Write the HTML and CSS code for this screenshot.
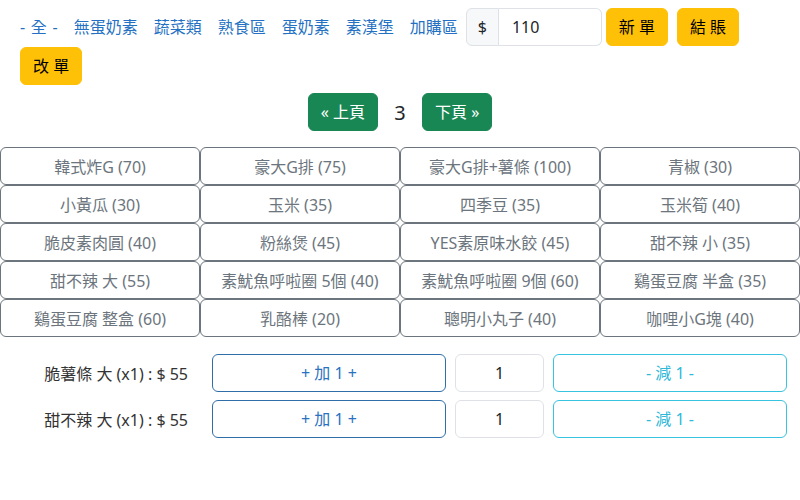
FILE: index.html
```html
<!DOCTYPE html>
<html lang="zh-Hant">
<head>
    <meta charset="UTF-8">
    <meta name="viewport" content="width=device-width, initial-scale=1.0">
    <title>點餐</title>
    <link rel="stylesheet" href="styles.css">
</head>
<body>

    <div class="toolbar">
        <a class="cat cat-all" href="#">- 全 -</a>
        <a class="cat" href="#">無蛋奶素</a>
        <a class="cat" href="#">蔬菜類</a>
        <a class="cat" href="#">熟食區</a>
        <a class="cat" href="#">蛋奶素</a>
        <a class="cat" href="#">素漢堡</a>
        <a class="cat" href="#">加購區</a>
        <div class="input-group">
            <span class="addon">$</span>
            <input type="text" class="total" value="110">
        </div>
        <button class="btn btn-warning btn-new">新 單</button>
        <button class="btn btn-warning btn-pay">結 賬</button>
        <button class="btn btn-warning">改 單</button>
    </div>

    <div class="pager">
        <button class="btn btn-success">« 上頁</button>
        <span class="page-no">3</span>
        <button class="btn btn-success">下頁 »</button>
    </div>

    <div class="menu-grid">
        <button class="item">韓式炸G (70)</button>
        <button class="item">豪大G排 (75)</button>
        <button class="item">豪大G排+薯條 (100)</button>
        <button class="item">青椒 (30)</button>
        <button class="item">小黃瓜 (30)</button>
        <button class="item">玉米 (35)</button>
        <button class="item">四季豆 (35)</button>
        <button class="item">玉米筍 (40)</button>
        <button class="item">脆皮素肉圓 (40)</button>
        <button class="item">粉絲煲 (45)</button>
        <button class="item">YES素原味水餃 (45)</button>
        <button class="item">甜不辣 小 (35)</button>
        <button class="item">甜不辣 大 (55)</button>
        <button class="item">素魷魚呼啦圈 5個 (40)</button>
        <button class="item">素魷魚呼啦圈 9個 (60)</button>
        <button class="item">鷄蛋豆腐 半盒 (35)</button>
        <button class="item">鷄蛋豆腐 整盒 (60)</button>
        <button class="item">乳酪棒 (20)</button>
        <button class="item">聰明小丸子 (40)</button>
        <button class="item">咖哩小G塊 (40)</button>
    </div>

    <div class="order">
        <div class="order-row">
            <span class="order-label">脆薯條 大 (x1) : $ 55</span>
            <button class="btn btn-outline-primary">+ 加 1 +</button>
            <span class="qty">1</span>
            <button class="btn btn-outline-info">- 減 1 -</button>
        </div>
        <div class="order-row">
            <span class="order-label">甜不辣 大 (x1) : $ 55</span>
            <button class="btn btn-outline-primary">+ 加 1 +</button>
            <span class="qty">1</span>
            <button class="btn btn-outline-info">- 減 1 -</button>
        </div>
    </div>

</body>
</html>
```

FILE: styles.css
```css
* {
    box-sizing: border-box;
}
body {
    font-family: 'Noto Sans', 'Noto Sans CJK TC', sans-serif;
    font-size: 16px;
    color: #212529;
    background-color: #fff;
    margin: 0;
}
.toolbar {
    display: flex;
    flex-wrap: wrap;
    align-items: center;
    row-gap: 1px;
    padding: 8px 20px 0;
}
.cat {
    color: #2470c2;
    text-decoration: none;
    margin-right: 16px;
    line-height: 38px;
}
.cat-all {
    word-spacing: 1.5px;
}
.cat:last-of-type {
    margin-right: 8px;
}
.input-group {
    display: flex;
    height: 38px;
    width: 136px;
}
.addon {
    display: flex;
    align-items: center;
    padding: 0 11px;
    background-color: #f6f8fa;
    border: 1px solid #dee2e6;
    border-radius: 6px 0 0 6px;
    color: #212529;
}
.total {
    width: 103px;
    min-width: 0;
    border: 1px solid #dee2e6;
    border-left: none;
    border-radius: 0 6px 6px 0;
    padding: 0 13px;
    font-family: inherit;
    font-size: 16px;
    color: #212529;
}
.btn {
    font-family: inherit;
    font-size: 16px;
    line-height: 24px;
    padding: 6px 12px;
    border: 1px solid transparent;
    border-radius: 6px;
    cursor: pointer;
    background: none;
}
.btn-warning {
    background-color: #ffc107;
    border-color: #ffc107;
    color: #000;
}
.btn-new {
    margin-left: 4px;
}
.btn-pay {
    margin-left: 9px;
}
.btn-success {
    background-color: #198754;
    border-color: #198754;
    color: #fff;
}
.pager {
    display: flex;
    justify-content: center;
    align-items: center;
    margin-top: 8px;
}
.page-no {
    font-size: 20px;
    width: 44px;
    text-align: center;
    color: #212529;
}
.menu-grid {
    display: grid;
    grid-template-columns: repeat(4, 1fr);
    margin-top: 16px;
}
.item {
    height: 38px;
    font-family: inherit;
    font-size: 16px;
    color: #6c757d;
    background-color: #fff;
    border: 1px solid #6c757d;
    border-radius: 6px;
    padding: 0 8px;
    white-space: nowrap;
}
.order {
    margin-top: 17px;
    display: flex;
    flex-direction: column;
    gap: 8px;
    padding-right: 13px;
}
.order-row {
    display: grid;
    grid-template-columns: 203px 1fr 89px 1fr;
    column-gap: 9px;
    align-items: center;
}
.order-label {
    text-align: right;
    padding-right: 15px;
    color: #333;
}
.btn-outline-primary {
    border-color: #2f6ea8;
    color: #2a72c0;
    height: 38px;
}
.btn-outline-info {
    border-color: #38c4e0;
    color: #30b8d8;
    height: 38px;
}
.qty {
    height: 38px;
    line-height: 36px;
    text-align: center;
    border: 1px solid #dee2e6;
    border-radius: 6px;
    color: #212529;
}
```
